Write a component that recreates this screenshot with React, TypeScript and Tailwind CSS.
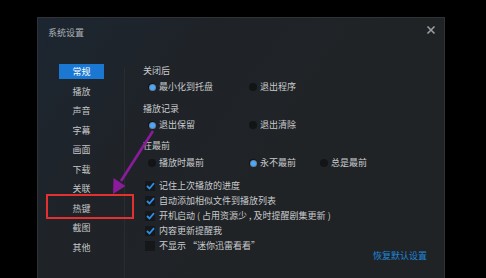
import React from 'react'

const font = { fontFamily: '"Noto Sans CJK SC", "Noto Sans", sans-serif' }

function Radio({ checked, label, width }: { checked?: boolean; label: string; width: string }) {
  return (
    <div className={`flex items-center gap-[3px] ${width}`}>
      <div className="w-[8px] h-[8px] rounded-full bg-[#121416] flex items-center justify-center">
        {checked && <div className="w-[5px] h-[5px] rounded-full bg-[#4aa8ff] ring-1 ring-[#9fd0ff]/60" />}
      </div>
      <span>{label}</span>
    </div>
  )
}

function Check({ checked, label }: { checked?: boolean; label: string }) {
  return (
    <div className="h-[15px] flex items-center gap-[4px] pl-[2px]">
      <div className="w-[10px] h-[10px] bg-[#151719] flex items-center justify-center">
        {checked && (
          <svg width="9" height="8" viewBox="0 0 9 8">
            <path d="M1 4 L3.5 6.5 L8 1.2" fill="none" stroke="#2b8fe8" strokeWidth="1.8" />
          </svg>
        )}
      </div>
      <span>{label}</span>
    </div>
  )
}

export default function App() {
  const tabs = ['常规', '播放', '声音', '字幕', '画面', '下载', '关联', '热键', '截图', '其他']

  return (
    <div className="w-[486px] h-[278px] bg-black overflow-hidden relative text-[9px] text-[#c9cbcd]" style={font}>
      <div className="ml-[37px] mt-[17px] w-[408px] h-[261px] border border-b-0 border-[#303336] bg-[linear-gradient(125deg,#1c2631_0%,#1f2328_30%,#202326_60%)] flex flex-col">
        <div className="h-[44px] flex justify-between pl-[10px] pr-[8px]">
          <span className="mt-[9px] text-[#aeb2b6] leading-[12px]">系统设置</span>
          <svg className="mt-[7px]" width="10" height="10" viewBox="0 0 10 10">
            <path d="M1.5 1.5 L8.5 8.5 M8.5 1.5 L1.5 8.5" stroke="#9a9ea2" strokeWidth="1.6" />
          </svg>
        </div>

        <div className="flex flex-1">
          <div className="w-[86px] pl-[21px] flex flex-col">
            {tabs.map((t, i) => (
              <div key={t} className="h-[19.5px] w-[45px] flex items-center">
                <div
                  className={`w-full h-[15px] flex items-center justify-center ${
                    i === 0 ? 'bg-[#1a78d2] text-white' : 'text-[#c4c6c8]'
                  }`}
                >
                  {t}
                </div>
              </div>
            ))}
          </div>

          <div className="w-px bg-[#2a2d30] mt-[6px]" />

          <div className="pl-[18px] flex flex-col leading-[12px]">
            <div className="h-[16px] mt-[1px] flex items-center">关闭后</div>
            <div className="h-[16px] flex items-center pl-[5px]">
              <Radio checked label="最小化到托盘" width="w-[101px]" />
              <Radio label="退出程序" width="w-[71px]" />
            </div>
            <div className="h-[16px] mt-[6px] flex items-center">播放记录</div>
            <div className="h-[16px] flex items-center pl-[5px]">
              <Radio checked label="退出保留" width="w-[101px]" />
              <Radio label="退出清除" width="w-[71px]" />
            </div>
            <div className="h-[16px] mt-[5px] flex items-center">在最前</div>
            <div className="h-[16px] mt-[1px] flex items-center pl-[5px]">
              <Radio label="播放时最前" width="w-[101px]" />
              <Radio checked label="永不最前" width="w-[71px]" />
              <Radio label="总是最前" width="w-[71px]" />
            </div>
            <div className="mt-[7px] flex flex-col">
              <Check checked label="记住上次播放的进度" />
              <Check checked label="自动添加相似文件到播放列表" />
              <Check checked label="开机启动 ( 占用资源少 , 及时提醒剧集更新 )" />
              <Check checked label="内容更新提醒我" />
              <Check label="不显示 “迷你迅雷看看”" />
            </div>
            <div className="w-[284px] flex justify-end mt-[-3px] h-[12px] items-center text-[#1f86d8]">
              恢复默认设置
            </div>
          </div>
        </div>
      </div>

      <div className="absolute left-[46px] top-[194px] w-[88px] h-[25px] border-2 border-[#e4312f]" />

      <svg className="absolute left-0 top-0 pointer-events-none" width="486" height="278">
        <line x1="153" y1="131" x2="121" y2="181" stroke="#8a1c9c" strokeWidth="2.6" />
        <polygon points="113,194 113.5,178 125.5,186" fill="#8a1c9c" />
      </svg>
    </div>
  )
}
